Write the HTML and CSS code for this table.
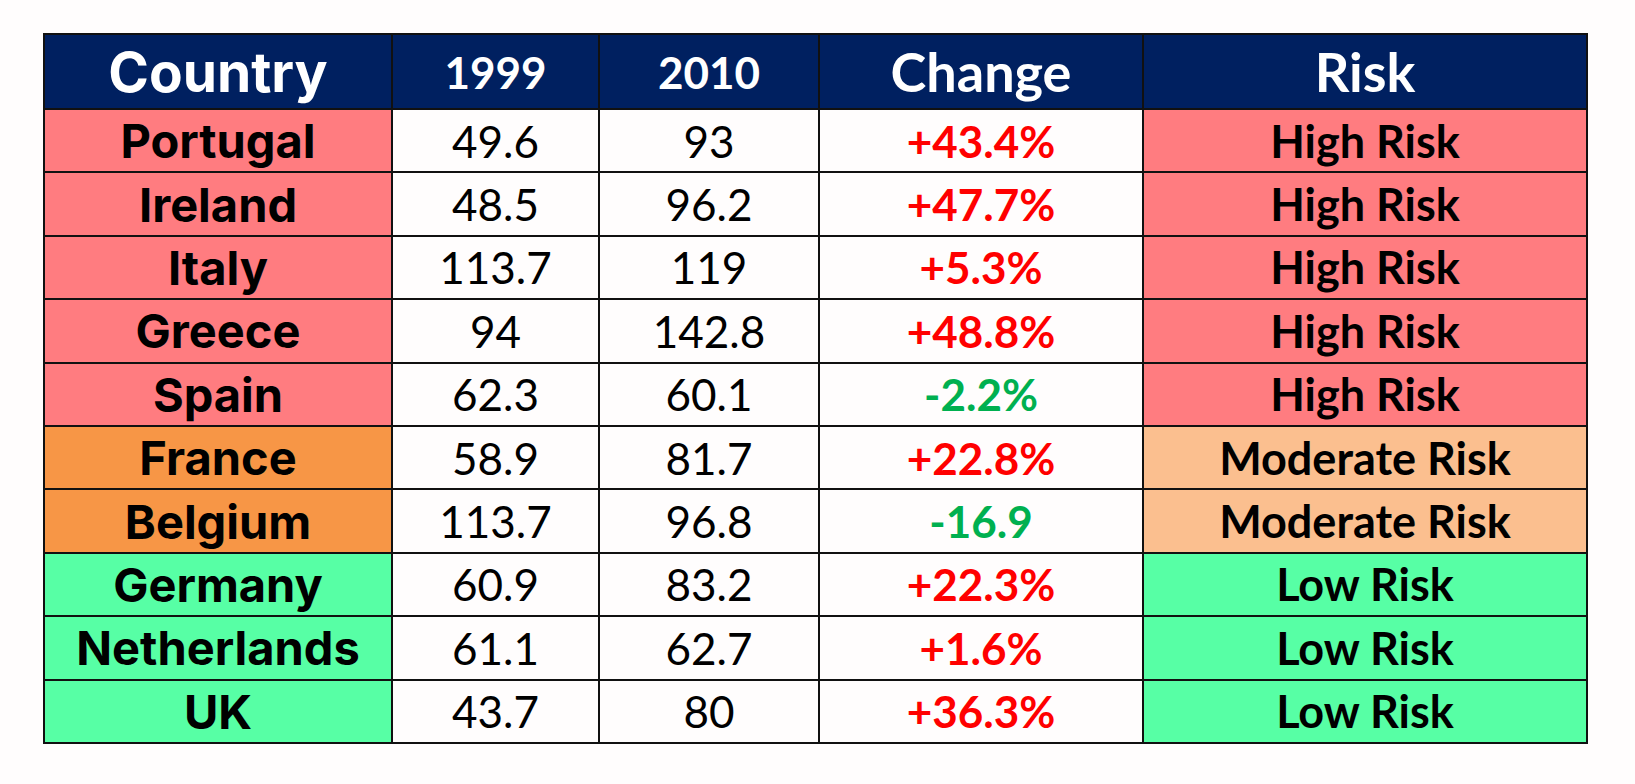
FILE: index.html
```html
<!DOCTYPE html>
<html>
<head>
<meta charset="utf-8">
<link rel="stylesheet" href="styles.css">
</head>
<body>
<div class="page">
<table class="debt">
  <colgroup>
    <col class="c-country"><col class="c-year"><col class="c-year2"><col class="c-change"><col class="c-risk">
  </colgroup>
  <thead>
    <tr class="head">
      <th class="h-country">Country</th>
      <th class="h-num">1999</th>
      <th class="h-num">2010</th>
      <th class="h-big">Change</th>
      <th class="h-big">Risk</th>
    </tr>
  </thead>
  <tbody>
    <tr><td class="country high">Portugal</td><td class="num">49.6</td><td class="num">93</td><td class="chg up">+43.4%</td><td class="risk high">High Risk</td></tr>
    <tr><td class="country high">Ireland</td><td class="num">48.5</td><td class="num">96.2</td><td class="chg up">+47.7%</td><td class="risk high">High Risk</td></tr>
    <tr><td class="country high">Italy</td><td class="num">113.7</td><td class="num">119</td><td class="chg up">+5.3%</td><td class="risk high">High Risk</td></tr>
    <tr><td class="country high">Greece</td><td class="num">94</td><td class="num">142.8</td><td class="chg up">+48.8%</td><td class="risk high">High Risk</td></tr>
    <tr><td class="country high">Spain</td><td class="num">62.3</td><td class="num">60.1</td><td class="chg down">-2.2%</td><td class="risk high">High Risk</td></tr>
    <tr><td class="country mod">France</td><td class="num">58.9</td><td class="num">81.7</td><td class="chg up">+22.8%</td><td class="risk modlight">Moderate Risk</td></tr>
    <tr><td class="country mod">Belgium</td><td class="num">113.7</td><td class="num">96.8</td><td class="chg down">-16.9</td><td class="risk modlight">Moderate Risk</td></tr>
    <tr><td class="country low">Germany</td><td class="num">60.9</td><td class="num">83.2</td><td class="chg up">+22.3%</td><td class="risk low">Low Risk</td></tr>
    <tr><td class="country low">Netherlands</td><td class="num">61.1</td><td class="num">62.7</td><td class="chg up">+1.6%</td><td class="risk low">Low Risk</td></tr>
    <tr><td class="country low">UK</td><td class="num">43.7</td><td class="num">80</td><td class="chg up">+36.3%</td><td class="risk low">Low Risk</td></tr>
  </tbody>
</table>
</div>
</body>
</html>
```

FILE: styles.css
```css
html, body {
  margin: 0;
  padding: 0;
  background: #fffdfd;
}
.page {
  padding: 33px 0 0 43px;
}
.debt {
  border-collapse: collapse;
  table-layout: fixed;
  width: 1543px;
  border: 2px solid #111;
}
.c-country { width: 348px; }
.c-year { width: 207px; }
.c-year2 { width: 220px; }
.c-change { width: 324px; }
.c-risk { width: 444px; }

.debt th, .debt td {
  border: 2px solid #111;
  text-align: center;
  vertical-align: middle;
  padding: 0;
  white-space: nowrap;
  overflow: hidden;
}
.head {
  height: 75px;
  background: #002060;
  color: #fff;
}
tbody tr {
  height: 63.4px;
}
.h-country {
  font-family: Inter, "DejaVu Sans", sans-serif;
  font-weight: 700;
  font-size: 55px;
  padding-top: 6px;
}
.h-num {
  font-family: Lato, "Liberation Sans", sans-serif;
  font-weight: 700;
  font-size: 44px;
  padding-bottom: 6px;
}
.h-big {
  font-family: Lato, "Liberation Sans", sans-serif;
  font-weight: 700;
  font-size: 54px;
  padding-top: 4px;
}
.country {
  font-family: Inter, "DejaVu Sans", sans-serif;
  font-weight: 700;
  font-size: 47px;
  color: #000;
  padding-top: 4px;
}
.num {
  font-family: Lato, "Liberation Sans", sans-serif;
  font-weight: 400;
  font-size: 44px;
  color: #000;
  background: #fffdfd;
  padding-top: 4px;
}
.chg {
  font-family: Lato, "Liberation Sans", sans-serif;
  font-weight: 700;
  font-size: 44px;
  background: #fffdfd;
  padding-top: 4px;
}
.risk {
  font-family: Lato, "Liberation Sans", sans-serif;
  font-weight: 700;
  font-size: 45px;
  color: #000;
  padding-top: 4px;
}
.up { color: #ff0000; }
.down { color: #00b050; }
.high { background: #ff7c80; }
.mod { background: #f79646; }
.modlight { background: #fbbf8f; }
.low { background: #57ffa5; }
```
